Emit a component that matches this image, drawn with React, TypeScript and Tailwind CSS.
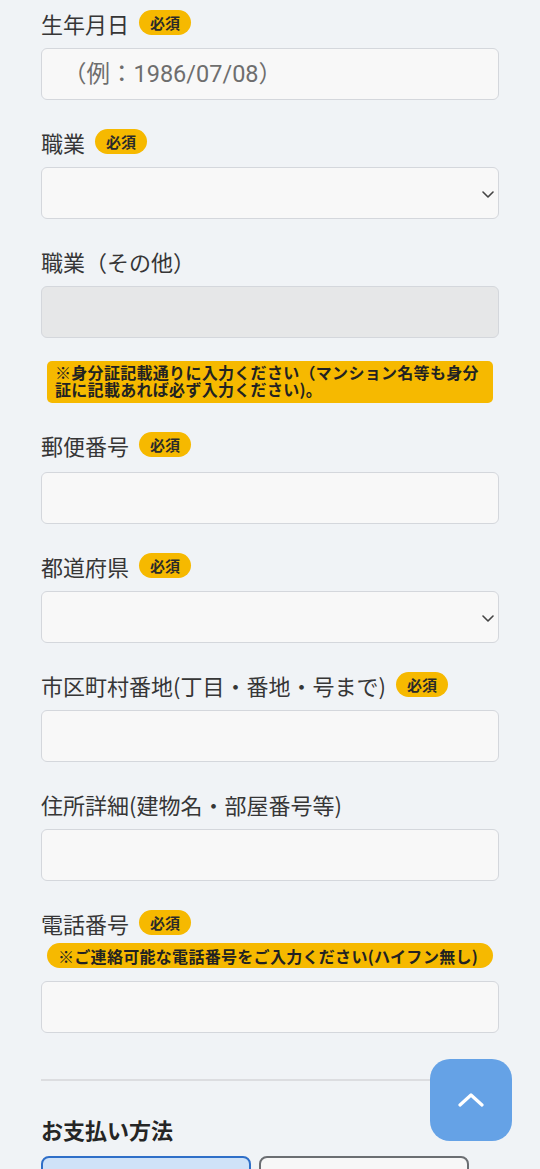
import type { ReactNode } from 'react';

const FONT = "font-['Noto_Sans_CJK_JP','Noto_Sans',sans-serif]";

function Required() {
  return (
    <span className="inline-flex h-[25px] items-center rounded-full bg-[#f6b900] px-[11px] text-[15px] font-bold leading-none text-[#2a2a2a]">
      必須
    </span>
  );
}

function Label({ children, required }: { children: ReactNode; required?: boolean }) {
  return (
    <div className="flex h-[25px] items-center gap-[10px]">
      <span className="text-[22px] leading-none text-[#363636]">{children}</span>
      {required && <Required />}
    </div>
  );
}

function TextInput({ placeholder, disabled }: { placeholder?: string; disabled?: boolean }) {
  return (
    <input
      type="text"
      disabled={disabled}
      placeholder={placeholder}
      className={`block h-[52px] w-full rounded-[6px] border-[1.5px] border-[#d4d7dc] pl-[21px] pr-[12px] font-['Roboto','Noto_Sans_CJK_JP',sans-serif] text-[23.5px] text-[#333] outline-none placeholder:text-[#6e6e6e] ${
        disabled ? 'bg-[#e6e7e8]' : 'bg-[#f8f8f8]'
      }`}
    />
  );
}

function SelectInput() {
  return (
    <div className="relative">
      <select className="block h-[52px] w-full appearance-none rounded-[6px] border-[1.5px] border-[#d4d7dc] bg-[#f8f8f8] px-[12px] text-[20px] outline-none">
        <option value=""></option>
      </select>
      <svg
        className="pointer-events-none absolute right-[5px] top-[24px]"
        width="12"
        height="7"
        viewBox="0 0 12 7"
        fill="none"
      >
        <path d="M1 1l5 5 5-5" stroke="#444" strokeWidth="1.6" strokeLinecap="round" strokeLinejoin="round" />
      </svg>
    </div>
  );
}

export default function App() {
  return (
    <div className={`min-h-[1300px] bg-[#f0f3f6] ${FONT}`}>
      <div className="flex flex-col px-[41px] pt-[10px]">
        {/* 生年月日 */}
        <Label required>生年月日</Label>
        <div className="mt-[13px]">
          <TextInput placeholder="（例：1986/07/08）" />
        </div>

        {/* 職業 */}
        <div className="mt-[29px]">
          <Label required>職業</Label>
        </div>
        <div className="mt-[13px]">
          <SelectInput />
        </div>

        <div className="mt-[29px]">
          <Label>職業（その他）</Label>
        </div>
        <div className="mt-[13px]">
          <TextInput disabled />
        </div>

        <div className="mx-[6px] mt-[23px] rounded-[5px] bg-[#f6b900] px-[8px] pb-[5px] pt-[3px] text-[16px] font-bold leading-[17px] tracking-[0.3px] text-[#222]">
          ※身分証記載通りに入力ください（マンション名等も身分証に記載あれば必ず入力ください)。
        </div>

        <div className="mt-[29px]">
          <Label required>郵便番号</Label>
        </div>
        <div className="mt-[15px]">
          <TextInput />
        </div>

        <div className="mt-[29px]">
          <Label required>都道府県</Label>
        </div>
        <div className="mt-[13px]">
          <SelectInput />
        </div>

        <div className="mt-[29px]">
          <Label required>市区町村番地(丁目・番地・号まで)</Label>
        </div>
        <div className="mt-[13px]">
          <TextInput />
        </div>

        <div className="mt-[29px]">
          <Label>住所詳細(建物名・部屋番号等)</Label>
        </div>
        <div className="mt-[13px]">
          <TextInput />
        </div>

        <div className="mt-[29px]">
          <Label required>電話番号</Label>
        </div>
        <div className="mx-[6px] mt-[8px] flex h-[25px] items-center rounded-full bg-[#f6b900] px-[11px] text-[16px] font-bold leading-none tracking-[0.3px] text-[#222]">
          ※ご連絡可能な電話番号をご入力ください(ハイフン無し)
        </div>
        <div className="mt-[13px]">
          <TextInput />
        </div>

        <div className="mt-[46px] h-[2px] bg-[#dcdde0]" />

        <h2 className="mt-[33px] text-[22px] font-bold leading-[30px] text-[#252525]">お支払い方法</h2>

        <div className="mt-[12px] flex gap-[8px]">
          <button
            type="button"
            className="h-[60px] w-[210px] rounded-[8px] border-[2.5px] border-[#2f6fc8] bg-[#cfe2f8]"
          />
          <button
            type="button"
            className="h-[60px] w-[210px] rounded-[8px] border-[2.5px] border-[#6b6e72] bg-[#f7f7f7]"
          />
        </div>
      </div>

      <button
        type="button"
        aria-label="ページトップへ"
        className="fixed bottom-[28px] right-[28px] flex h-[82px] w-[82px] items-center justify-center rounded-[20px] bg-[#65a2e6]"
      >
        <svg width="26" height="14" viewBox="0 0 26 14" fill="none">
          <path d="M2 12L13 2l11 10" stroke="#fff" strokeWidth="3.2" strokeLinecap="round" strokeLinejoin="round" />
        </svg>
      </button>
    </div>
  );
}
